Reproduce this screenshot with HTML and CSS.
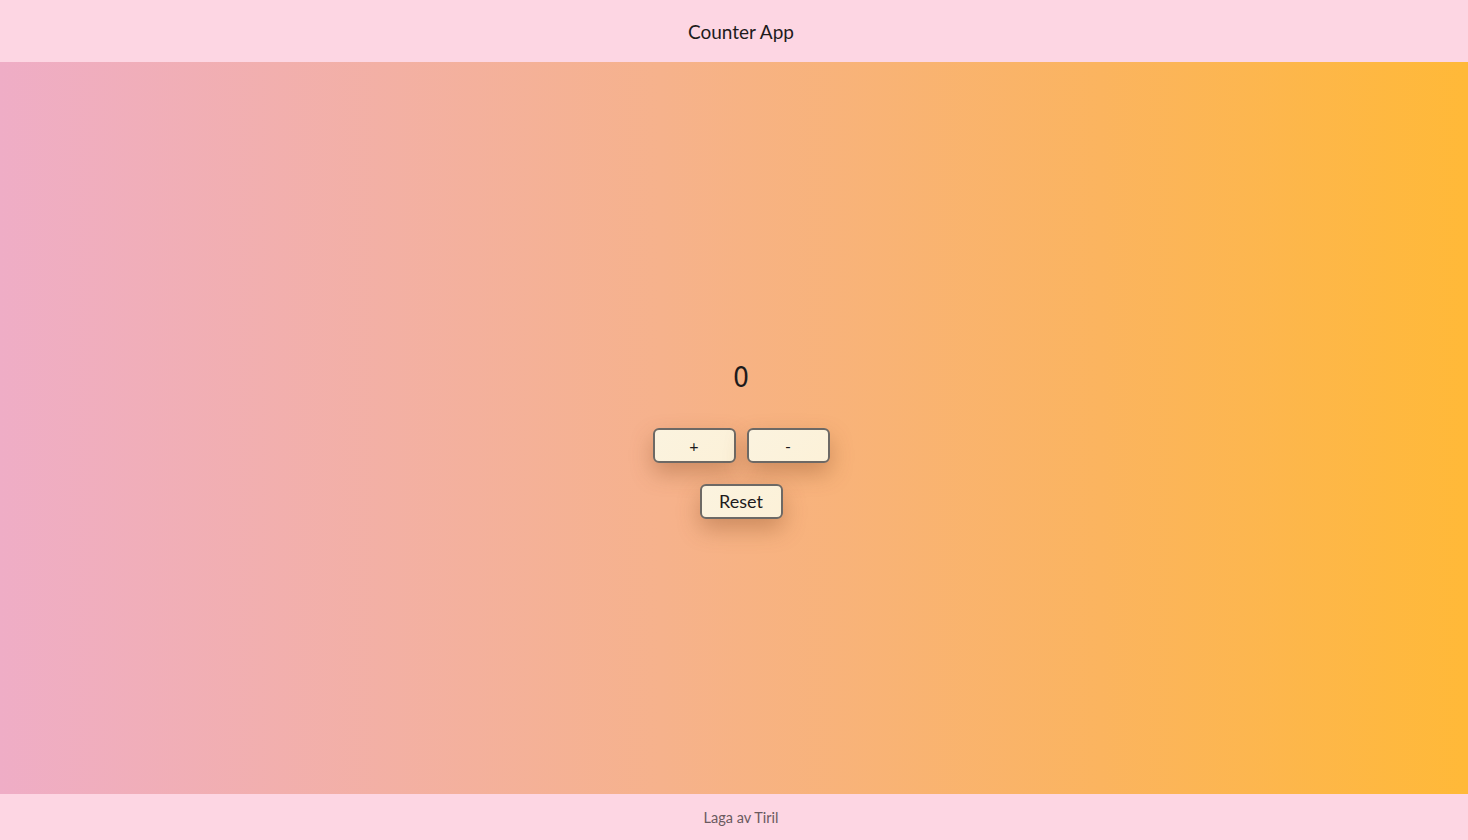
FILE: index.html
```html
<!DOCTYPE html>
<html lang="no">
<head>
<meta charset="utf-8">
<title>Counter App</title>
<link rel="stylesheet" href="styles.css">
</head>
<body>
<header class="top">Counter App</header>
<main class="main">
  <div class="count">0</div>
  <div class="row">
    <button class="btn">+</button>
    <button class="btn">-</button>
  </div>
  <button class="btn reset">Reset</button>
</main>
<footer class="foot">Laga av Tiril</footer>
</body>
</html>
```
FILE: styles.css
```css
html, body { margin: 0; padding: 0; height: 100%; }
body {
  font-family: "Lato", "Noto Sans", sans-serif;
  display: flex;
  flex-direction: column;
  color: #1d1b1c;
}
.top {
  height: 62px;
  background: #fdd6e3;
  display: flex;
  align-items: center;
  justify-content: center;
  font-size: 19px;
  box-sizing: border-box;
  padding-top: 0;
  padding-left: 14px;
}
.main {
  flex: 1;
  background: linear-gradient(to right, #efadc6 0%, #f6b28c 45%, #fbb45f 75%, #ffb938 100%);
  display: flex;
  flex-direction: column;
  align-items: center;
  justify-content: center;
  padding-top: 24px;
  padding-left: 14px;
}
.count {
  font-family: "DejaVu Sans", sans-serif;
  font-size: 28px;
  line-height: 32px;
  margin-bottom: 34px;
  transform: scaleX(0.9);
}
.row { display: flex; gap: 11px; }
.btn {
  width: 83px;
  height: 35px;
  background: linear-gradient(135deg, #fbf3df, #fcf1d8);
  border: 2px solid #6d6965;
  border-radius: 6px;
  font-family: "Lato", "Noto Sans", sans-serif;
  font-size: 16px;
  color: #1d1b1c;
  box-shadow: 0 10px 22px rgba(140, 80, 40, 0.38);
  padding: 0;
}
.reset { margin-top: 21px; font-size: 18px; }
.foot {
  height: 46px;
  background: #fdd6e3;
  display: flex;
  align-items: center;
  justify-content: center;
  font-size: 14.5px;
  color: #6a5a60;
  padding-left: 14px;
}
```
